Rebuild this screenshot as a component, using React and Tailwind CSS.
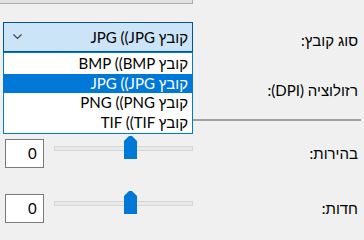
import React from 'react';

const font = { fontFamily: 'Lato, "Liberation Sans", "DejaVu Sans", sans-serif' };

const Thumb = () => (
  <svg width="13" height="23" viewBox="0 0 13 23" className="absolute top-[-11px] left-[69px]">
    <polygon points="0,5 5,0 8,0 13,5 13,23 0,23" fill="#0078d7" />
  </svg>
);

const SliderRow = ({ label, top }) => (
  <div className="flex h-[29px]" style={{ marginTop: top }}>
    <div className="w-[193px] flex items-start">
      <div className="ml-[5px] w-[42px] h-[29px] bg-white border border-[#7a7a7a] flex items-center justify-end pr-[6px] text-[15px] leading-none text-black">
        0
      </div>
      <div className="relative ml-[10px] mt-[7px] w-[154px] h-[5px] bg-[#e7eaea] border border-[#d6d6d6]">
        <Thumb />
      </div>
    </div>
    <div dir="rtl" className="flex-1 pr-[6px] text-[15px] leading-[29px] text-black">
      {label}
    </div>
  </div>
);

const items = [['BMP ((BMP', 'קובץ'], ['JPG ((JPG', 'קובץ'], ['PNG ((PNG', 'קובץ'], ['TIF ((TIF', 'קובץ']];

export default function App() {
  return (
    <div className="relative w-[364px] h-[240px] bg-[#f0f0f0] overflow-hidden" style={font}>
      <div className="h-[4px] w-[193px] bg-[#e1e1e1] border-b border-r border-[#adadad]" />

      <div className="mt-[18px] flex h-[30px]">
        <div className="ml-[3px] w-[190px] h-[30px] bg-[#cce4f7] border border-[#005499] flex items-center justify-between pl-[9px] pr-[4px]">
          <svg width="9" height="6" viewBox="0 0 9 6">
            <polyline points="0.5,0.5 4.5,4.5 8.5,0.5" fill="none" stroke="#444" strokeWidth="1.2" />
          </svg>
          <span dir="ltr" className="text-[15px] leading-none text-black">JPG ((JPG קובץ</span>
        </div>
        <div dir="rtl" className="flex-1 pr-[6px] pt-[6px] text-[15px] leading-[24px] text-black">סוג קובץ:</div>
      </div>

      <div className="flex mt-[28px] h-[20px]">
        <div className="w-[193px]" />
        <div dir="rtl" className="flex-1 pr-[6px] text-[15px] leading-[20px] text-black">רזולוציה (DPI):</div>
      </div>

      <div className="mt-[19px] ml-[4px] mr-[3px] h-[2px] bg-[#a0a0a0]" />

      <SliderRow label="בהירות:" top={18} />
      <SliderRow label="חדות:" top={26} />

      <div className="absolute left-[3px] top-[52px] w-[190px] h-[82px] bg-white border border-[#0078d7] flex flex-col pt-[1px]">
        {items.map(([latin, heb], i) => (
          <div
            key={latin}
            dir="ltr"
            className={`h-[19.5px] flex items-center justify-end pr-[4px] text-[15px] leading-none ${i === 1 ? 'bg-[#0078d7] text-white' : 'text-black'}`}
          >
            {latin} {heb}
          </div>
        ))}
      </div>
    </div>
  );
}
